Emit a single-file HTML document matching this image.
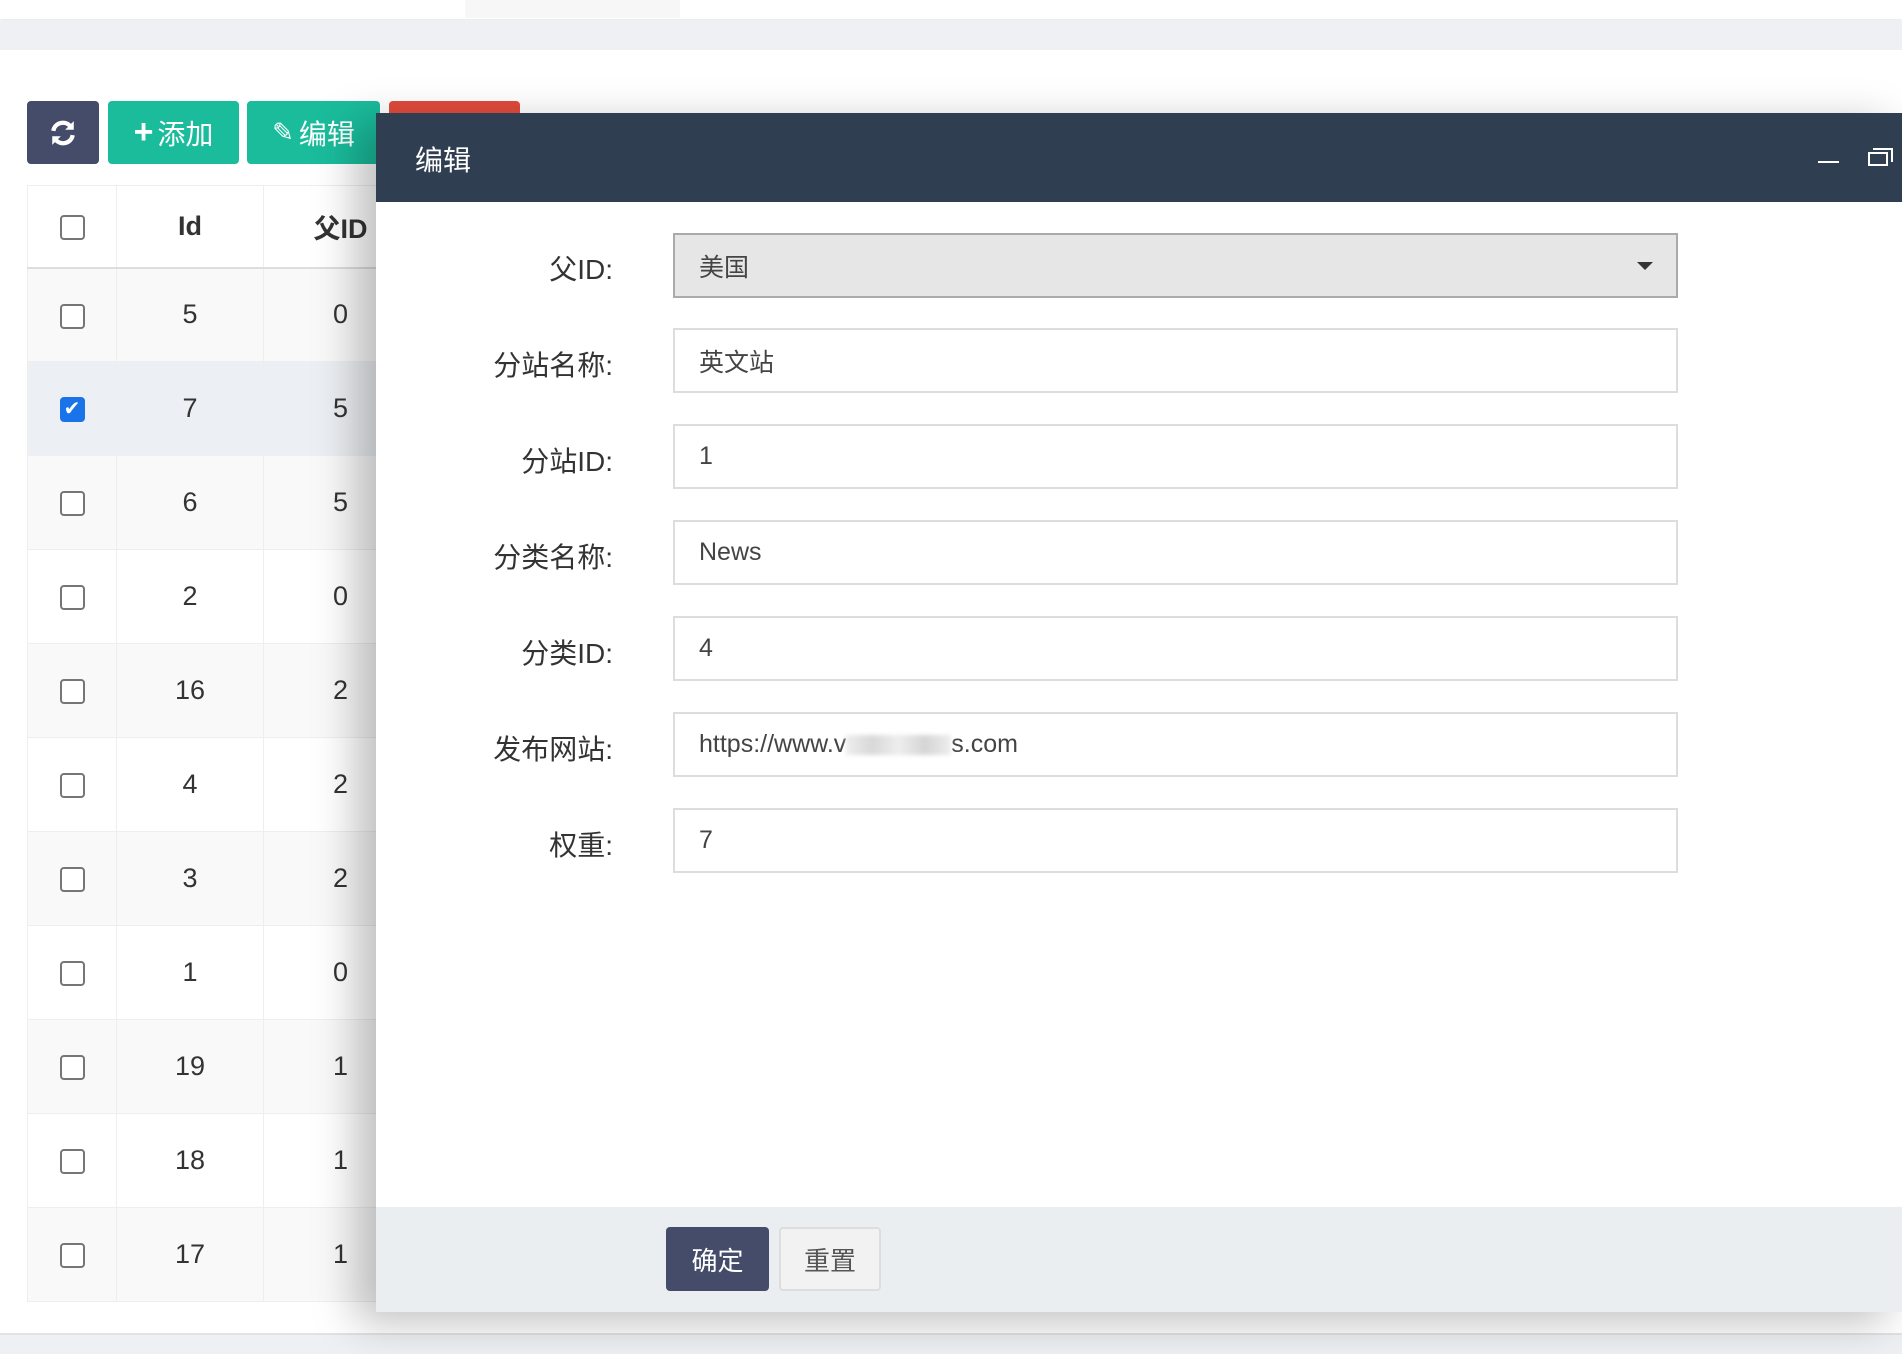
<!DOCTYPE html>
<html><head><meta charset="utf-8"><style>
*{box-sizing:border-box;margin:0;padding:0}
body{width:1902px;height:1354px;overflow:hidden;position:relative;background:#fff;font-family:"Liberation Sans","Noto Sans CJK SC",sans-serif;color:#333}
.abs{position:absolute}
.btn{position:absolute;top:101px;height:63px;border-radius:4px;color:#fff;font-size:28px;display:flex;align-items:center;justify-content:center}
table{position:absolute;left:27px;top:185px;border-collapse:collapse;width:391px}
td,th{border:1px solid #eee;text-align:center;font-size:27px;height:94px}
th{height:82px;font-weight:bold;border-bottom:2px solid #ddd}
.cb{display:inline-block;width:25px;height:25px;border:2px solid #767676;border-radius:4px;background:#fff;vertical-align:middle}
.cbk{background:#1a73e8;border-color:#1a73e8;color:#fff;font-size:20px;line-height:21px}
.lab{position:absolute;right:1289px;font-size:28px;color:#333;text-align:right}
.inp{position:absolute;left:673px;width:1005px;height:65px;border:2px solid #ddd;background:#fff;font-size:25px;padding-left:24px;display:flex;align-items:center;color:#444}
</style></head><body>
<div class="abs" style="left:0;top:0;width:1902px;height:19px;background:#fff;box-shadow:0 1px 3px rgba(0,0,0,.12)"></div>
<div class="abs" style="left:465px;top:0;width:215px;height:18px;background:#f7f7f7"></div>
<div class="abs" style="left:0;top:20px;width:1902px;height:30px;background:#eef0f3"></div>
<div class="btn" style="left:27px;width:72px;background:#444c69"><svg width="28" height="28" viewBox="0 0 26 26"><path d="M4 11A9 9 0 0 1 20 7M22 15A9 9 0 0 1 6 19" stroke="#fff" stroke-width="4" fill="none"/><path d="M23 2v8h-8zM3 24v-8h8z" fill="#fff"/></svg></div>
<div class="btn" style="left:108px;width:131px;background:#1abc9c"><b style="font-size:34px;margin-right:4px">+</b>添加</div>
<div class="btn" style="left:247px;width:133px;background:#1abc9c"><span style="font-size:26px;margin-right:5px">✎</span>编辑</div>
<div class="btn" style="left:389px;width:131px;background:#e04b3c"></div>
<table>
<tr><th style="width:89px"><span class="cb"></span></th><th style="width:147px">Id</th><th>父ID</th></tr>
<tr style="background:#f9f9f9"><td><span class="cb"></span></td><td>5</td><td>0</td></tr>
<tr style="background:#eceff3"><td><span class="cb cbk">✔</span></td><td>7</td><td>5</td></tr>
<tr style="background:#f9f9f9"><td><span class="cb"></span></td><td>6</td><td>5</td></tr>
<tr><td><span class="cb"></span></td><td>2</td><td>0</td></tr>
<tr style="background:#f9f9f9"><td><span class="cb"></span></td><td>16</td><td>2</td></tr>
<tr><td><span class="cb"></span></td><td>4</td><td>2</td></tr>
<tr style="background:#f9f9f9"><td><span class="cb"></span></td><td>3</td><td>2</td></tr>
<tr><td><span class="cb"></span></td><td>1</td><td>0</td></tr>
<tr style="background:#f9f9f9"><td><span class="cb"></span></td><td>19</td><td>1</td></tr>
<tr><td><span class="cb"></span></td><td>18</td><td>1</td></tr>
<tr style="background:#f9f9f9"><td><span class="cb"></span></td><td>17</td><td>1</td></tr>
</table>
<div class="abs" style="left:0;top:1333px;width:1902px;height:21px;background:#eef0f3;border-top:2px solid #e2e2e2"></div>
<div class="abs" style="left:376px;top:113px;width:1530px;height:1199px;background:#fff;box-shadow:-20px 10px 40px rgba(0,0,0,.25)">
 <div class="abs" style="left:0;top:0;width:1530px;height:89px;background:#2f3e50;color:#fff;font-size:28px;padding:26px 0 0 39px">编辑</div>
 <div class="abs" style="left:1442px;top:48px;width:21px;height:2px;background:#fff"></div>
 <div class="abs" style="left:1492px;top:39px;width:20px;height:14px;border:2px solid #fff"></div>
 <div class="abs" style="left:1497px;top:35px;width:20px;height:14px;border-top:2px solid #fff;border-right:2px solid #fff"></div>
 <div class="abs" style="left:0;top:1094px;width:1530px;height:105px;background:#ebeef0"></div>
 <div class="abs" style="left:290px;top:1114px;width:103px;height:64px;background:#444c69;border-radius:4px;color:#fff;font-size:26px;display:flex;align-items:center;justify-content:center">确定</div>
 <div class="abs" style="left:403px;top:1114px;width:102px;height:64px;background:#f2f2f2;border:2px solid #ddd;border-radius:4px;color:#555;font-size:26px;display:flex;align-items:center;justify-content:center">重置</div>
</div>
<div class="lab" style="top:248px">父ID:</div>
<div class="lab" style="top:344px">分站名称:</div>
<div class="lab" style="top:440px">分站ID:</div>
<div class="lab" style="top:536px">分类名称:</div>
<div class="lab" style="top:632px">分类ID:</div>
<div class="lab" style="top:728px">发布网站:</div>
<div class="lab" style="top:824px">权重:</div>
<div class="inp" style="top:233px;background:#e6e6e6;border-color:#aaa">美国<span class="abs" style="left:962px;top:27px;border-left:8px solid transparent;border-right:8px solid transparent;border-top:8px solid #333"></span></div>
<div class="inp" style="top:328px">英文站</div>
<div class="inp" style="top:424px">1</div>
<div class="inp" style="top:520px">News</div>
<div class="inp" style="top:616px">4</div>
<div class="inp" style="top:712px">https://www.v<span style="display:inline-block;width:105px;height:20px;background:linear-gradient(90deg,#eee,#d8d8d8,#eee,#d5d5d5,#eee);filter:blur(2px)"></span>s.com</div>
<div class="inp" style="top:808px">7</div>
</body></html>
